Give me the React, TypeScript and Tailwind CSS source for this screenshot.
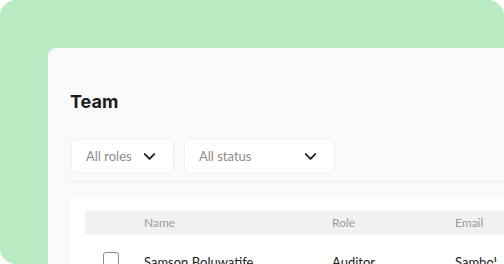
import { ChevronDown } from "lucide-react";

function Select({ label, width }: { label: string; width: string }) {
  return (
    <div
      className={`${width} h-[34px] flex items-center justify-between pl-[14px] pr-[14px] bg-white rounded-md border border-[#f0f0f0]`}
    >
      <span className="text-[13px] text-[#8c8c8c] mt-px">{label}</span>
      <ChevronDown size={19} strokeWidth={2.4} className="text-[#222]" />
    </div>
  );
}

export default function App() {
  return (
    <div
      className="w-[504px] h-[264px] bg-white"
      style={{ fontFamily: "Lato, 'Noto Sans', sans-serif" }}
    >
      <div className="w-full h-full bg-[#b9ecc3] rounded-2xl overflow-hidden pl-12 pt-12">
        <div className="h-full bg-[#f9f9f9] rounded-tl-lg pl-[22px] pt-[42px]">
          {/* Title */}
          <h1
            className="text-[18px] font-bold text-[#1c1c1c] leading-[24px]"
            style={{ fontFamily: "Inter, 'Noto Sans', sans-serif" }}
          >
            Team
          </h1>

          {/* Filters */}
          <div className="flex gap-[10px] mt-[25px] pl-px">
            <Select label="All roles" width="w-[103px]" />
            <Select label="All status" width="w-[151px]" />
          </div>

          <div className="h-px bg-[#ececec] mt-[8px]" />

          {/* Table */}
          <div className="mt-[15px] bg-white rounded-tl-lg pl-[15px] pt-[14px] h-[100px]">
            <div className="flex items-center h-[24px] bg-[#f1f1f1] text-[12px] text-[#9a9a9a]">
              <div className="w-[59px]" />
              <div className="w-[188px]">Name</div>
              <div className="w-[123px]">Role</div>
              <div className="flex-1 whitespace-nowrap">Email</div>
            </div>
            <div className="flex items-start h-[50px] text-[13px] leading-[16px] text-[#222]">
              <div className="w-[59px] pl-[18px] pt-[17px]">
                <div className="w-[16px] h-[16px] border-[1.5px] border-[#8a8a8a] rounded-[3px]" />
              </div>
              <div className="w-[188px] pt-[19px]">Samson Boluwatife</div>
              <div className="w-[123px] pt-[19px]">Auditor</div>
              <div className="flex-1 pt-[19px] whitespace-nowrap overflow-hidden">Sambolu@gmail.com</div>
            </div>
          </div>
        </div>
      </div>
    </div>
  );
}
